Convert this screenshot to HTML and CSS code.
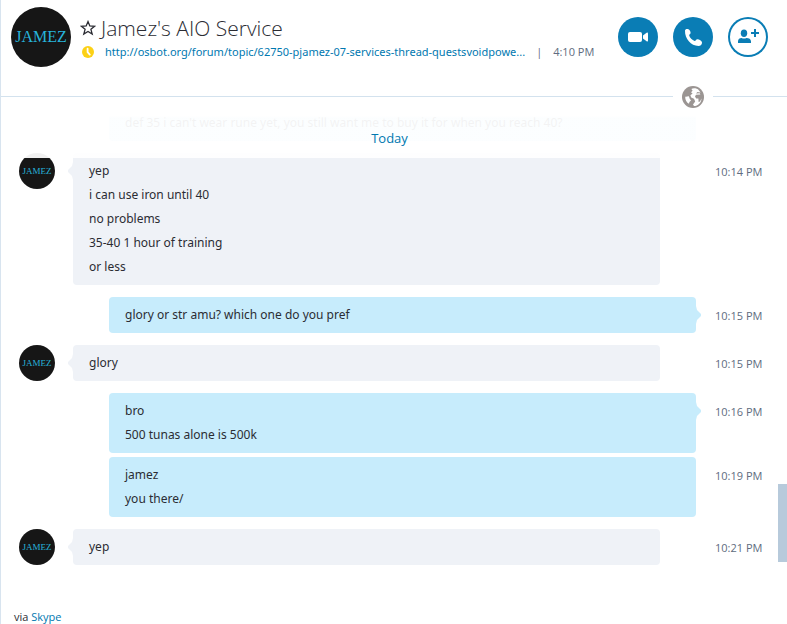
FILE: index.html
```html
<!DOCTYPE html>
<html lang="en">
  <head>
    <meta charset="UTF-8" />
    <meta name="viewport" content="width=device-width, initial-scale=1.0" />
    <title>Jamez's AIO Service</title>

    <link rel="stylesheet" href="styles.css">
  </head>
  <body>
    <div class="app">
      <header class="header">
        <div class="avatar avatar-large">JAMEZ</div>
        <div class="contact">
          <div class="contact-row">
            <svg class="icon-star" viewBox="0 0 16 16" width="16" height="16">
              <path d="M8 1.6 L9.8 6 L14.6 6.3 L10.9 9.3 L12.2 14 L8 11.4 L3.8 14 L5.1 9.3 L1.4 6.3 L6.2 6 Z" fill="none" stroke="#2b2c33" stroke-width="1.3" />
            </svg>
            <h1 class="title">Jamez's AIO Service</h1>
          </div>
          <div class="contact-row status">
            <svg class="icon-away" viewBox="0 0 12 12" width="12" height="12">
              <circle cx="6" cy="6" r="6" fill="#fcd116" />
              <path d="M5.6 2.6 V6.2 L7.8 8.6" fill="none" stroke="#fff" stroke-width="1.8" stroke-linecap="round" />
            </svg>
            <a class="mood" href="#">http://osbot.org/forum/topic/62750-pjamez-07-services-thread-questsvoidpowe...</a>
            <span class="separator">|</span>
            <span class="local-time">4:10 PM</span>
          </div>
        </div>
        <div class="actions">
          <button class="action" type="button" aria-label="Video call">
            <svg viewBox="0 0 40 40" width="40" height="40">
              <rect x="10" y="15" width="14" height="10" rx="2" fill="#fff" />
              <path d="M25 18.6 L28.6 15.8 Q30 15 30 16.6 V23.4 Q30 25 28.6 24.2 L25 21.4 Z" fill="#fff" />
            </svg>
          </button>
          <button class="action" type="button" aria-label="Call">
            <svg viewBox="0 0 40 40" width="40" height="40">
              <path d="M12 13.8 C12 12.2 13.4 11.8 14.8 12 C16.4 12.3 17.7 14.6 17.6 16 C17.5 17.2 16 17.4 16.2 18.5 C16.8 21 19.2 23.2 21.6 23.9 C22.8 24.2 22.9 22.4 24.4 22.3 C26 22.2 28.8 23.8 29 25.2 C29.2 27.4 27.6 29 25.4 29 C18 29 11.8 21.6 12 13.8 Z" fill="#fff" />
            </svg>
          </button>
          <button class="action action-outline" type="button" aria-label="Add people">
            <svg viewBox="0 0 40 40" width="40" height="40">
              <ellipse cx="16" cy="16.2" rx="3.2" ry="3.7" fill="#0a7db5" />
              <path d="M10 26 V24.4 C10 22.2 11.6 21 13.6 21 C15 21.8 17 21.8 18.4 21 C21 21 23 22.2 23 24.4 V26 Z" fill="#0a7db5" />
              <path d="M27 12 V20 M23 16 H31" stroke="#0a7db5" stroke-width="2" />
            </svg>
          </button>
        </div>
      </header>

      <div class="divider">
        <span class="line line-long"></span>
        <svg class="icon-globe" viewBox="0 0 22 22" width="22" height="22">
          <circle cx="11" cy="11" r="11" fill="#9b9593" />
          <path d="M9.4 3 C11 2 15 2 17 4.4 L18.6 6.4 L15.4 6 L14 7.4 L17.6 7.2 L18.4 8.6 L14 8.8 L13 10.4 L14.2 12.4 L16.4 12.6 L16.6 16 L18 15.6 L19.4 12.4 C19.6 16.4 16 20 12 20 L11 18.6 L13.2 15.6 L12 12.8 L9.2 11.4 L8.4 9.2 L10.6 7.4 L9 6.2 L10.6 4.8 Z" fill="#fff" />
          <path d="M3.2 10.6 C4.4 11.4 5.6 9.8 7 10.4 L7.6 12.6 L9 14.6 L7.4 16 L7 17.8 C4.8 16.8 3 14 3.2 10.6 Z" fill="#fff" />
        </svg>
        <span class="line line-short"></span>
      </div>

      <main class="chat">
        <div class="day"><span>Today</span></div>

        <div class="messages">
          <div class="message outgoing">
            <div class="bubble"><p>def 35 i can't wear rune yet, you still want me to buy it for when you reach 40?</p></div>
            <div class="time"></div>
          </div>

          <div class="message incoming">
            <div class="avatar">JAMEZ</div>
            <div class="bubble tail">
              <p>yep</p>
              <p>i can use iron until 40</p>
              <p>no problems</p>
              <p>35-40 1 hour of training</p>
              <p>or less</p>
            </div>
            <div class="time">10:14 PM</div>
          </div>

          <div class="message outgoing">
            <div class="bubble tail"><p>glory or str amu? which one do you pref</p></div>
            <div class="time">10:15 PM</div>
          </div>

          <div class="message incoming">
            <div class="avatar">JAMEZ</div>
            <div class="bubble tail"><p>glory</p></div>
            <div class="time">10:15 PM</div>
          </div>

          <div class="message outgoing">
            <div class="bubble tail">
              <p>bro</p>
              <p>500 tunas alone is 500k</p>
            </div>
            <div class="time">10:16 PM</div>
          </div>

          <div class="message outgoing follow">
            <div class="bubble">
              <p>jamez</p>
              <p>you there/</p>
            </div>
            <div class="time">10:19 PM</div>
          </div>

          <div class="message incoming">
            <div class="avatar">JAMEZ</div>
            <div class="bubble tail"><p>yep</p></div>
            <div class="time">10:21 PM</div>
          </div>
        </div>

        <div class="scrollbar"><div class="thumb"></div></div>
      </main>

      <footer class="footer">via <a href="#">Skype</a></footer>
    </div>
  </body>
</html>
```

FILE: styles.css
```css
* {
  box-sizing: border-box;
  margin: 0;
  padding: 0;
}

body {
  font-family: "Open Sans", "Noto Sans", sans-serif;
  font-size: 13px;
  color: #2b2c33;
  background-color: #fff;
}

a {
  color: #0078b0;
  text-decoration: none;
}

.app {
  display: flex;
  flex-direction: column;
  min-height: 100vh;
  border-left: 1px solid #d8e4ef;
}

/* header */

.header {
  display: flex;
  align-items: flex-start;
  height: 86px;
  padding: 7px 19px 0 10px;
}

.avatar {
  display: flex;
  flex: none;
  align-items: center;
  justify-content: center;
  width: 36px;
  height: 36px;
  border-radius: 50%;
  background-color: #161616;
  color: #27b4db;
  font-family: "Liberation Serif", serif;
  font-size: 9px;
}

.avatar-large {
  width: 60px;
  height: 60px;
  font-size: 16px;
}

.contact {
  flex: 1;
  min-width: 0;
  padding: 7px 0 0 9px;
}

.contact-row {
  display: flex;
  align-items: center;
  gap: 5px;
  height: 28px;
}

.title {
  font-size: 21px;
  font-weight: 300;
  line-height: 28px;
  white-space: nowrap;
}

.status {
  gap: 11px;
  height: 20px;
  padding-left: 2px;
  font-size: 11px;
  line-height: 20px;
  white-space: nowrap;
}

.mood {
  overflow: hidden;
  font-family: "Noto Sans", sans-serif;
  text-overflow: ellipsis;
}

.icon-star,
.icon-away {
  flex: none;
}

.separator,
.local-time,
.time {
  color: #606c80;
}

.actions {
  display: flex;
  gap: 15px;
  padding-top: 10px;
}

.action {
  width: 40px;
  height: 40px;
  border: none;
  border-radius: 50%;
  background-color: #0a7db5;
}

.action svg {
  display: block;
}

.action-outline {
  background-color: #fff;
  box-shadow: inset 0 0 0 2px #0a7db5;
}

.divider {
  position: relative;
  z-index: 2;
  display: flex;
  align-items: center;
  gap: 9px;
  height: 22px;
}

.line {
  height: 2px;
  border-top: 1px solid #d3e2ee;
}

.line-long {
  flex: 1;
}

.line-short {
  width: 74px;
}

/* conversation */

.chat {
  position: relative;
  display: flex;
}

.day {
  position: absolute;
  z-index: 1;
  top: -8px;
  left: 0;
  right: 9px;
  display: flex;
  justify-content: center;
  height: 58px;
  padding-top: 30px;
  background-image: linear-gradient(#fff 16px, rgba(255, 255, 255, 0.94) 18px);
  color: #0078b0;
  line-height: 16px;
}

.messages {
  flex: 1;
  padding-bottom: 35px;
}

.message {
  display: flex;
  align-items: flex-start;
  margin-top: 12px;
  padding-left: 18px;
}

.message:first-child {
  margin-top: 0;
}

.message.follow {
  margin-top: 4px;
}

.bubble {
  position: relative;
  flex: 1;
  padding: 6px 16px;
  border-radius: 4px;
  font-family: "Noto Sans", sans-serif;
  font-size: 12px;
  line-height: 24px;
}

.incoming .bubble {
  margin: 0 55px 0 18px;
  background-color: #eff2f7;
}

.outgoing .bubble {
  margin: 0 19px 0 90px;
  background-color: #c7ecfc;
}

.message:first-child .bubble {
  margin-top: -3px;
}

.tail::after {
  content: "";
  position: absolute;
  top: 9px;
  width: 5px;
  height: 18px;
  background-color: inherit;
}

.incoming .tail::after {
  right: 100%;
  clip-path: polygon(100% 0, 80% 22%, 0 44%, 0 56%, 80% 78%, 100% 100%);
}

.outgoing .tail::after {
  left: 100%;
  clip-path: polygon(0 0, 20% 22%, 100% 44%, 100% 56%, 20% 78%, 0 100%);
}

.time {
  width: 63px;
  padding-top: 10px;
  font-size: 11px;
  line-height: 18px;
}

.scrollbar {
  display: flex;
  align-items: flex-end;
  width: 9px;
  padding-bottom: 38px;
}

.thumb {
  width: 9px;
  height: 78px;
  background-color: #b7cadb;
}

.footer {
  padding: 9px 13px 0;
  font-size: 11px;
  line-height: 16px;
}
```
